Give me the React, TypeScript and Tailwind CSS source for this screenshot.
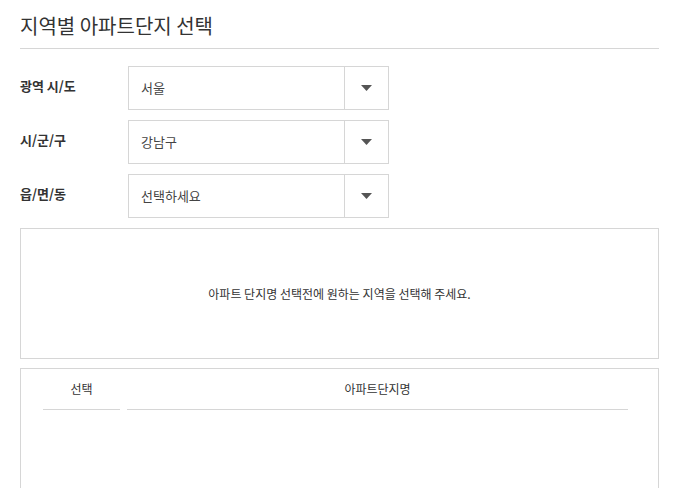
import React from "react";

const font = { fontFamily: '"Noto Sans CJK KR", "Noto Sans", sans-serif' };

function SelectRow({ label, value }: { label: string; value: string }) {
  return (
    <div className="flex h-[44px]">
      <div className="w-[108px] pt-[10px] text-[13px] font-bold leading-[20px] text-[#333]">{label}</div>
      <div className="flex w-[261px] border border-[#d6d6d6] bg-white">
        <div className="flex flex-1 items-center pl-[12px] text-[13px] text-[#444]">{value}</div>
        <div className="flex w-[44px] items-center justify-center border-l border-[#d6d6d6]">
          <svg width="11" height="6" viewBox="0 0 11 6">
            <path d="M0 0 H11 L5.5 6 Z" fill="#555" />
          </svg>
        </div>
      </div>
    </div>
  );
}

export default function App() {
  return (
    <div className="min-h-[488px] w-[684px] bg-white" style={font}>
      <div className="ml-[20px] w-[639px] pt-[11px]">
        <h2 className="border-b border-[#d6d6d6] pb-[7px] text-[20px] font-normal leading-[30px] text-[#333]">
          지역별 아파트단지 선택
        </h2>
        <div className="mt-[17px] flex flex-col gap-[10px]">
          <SelectRow label="광역 시/도" value="서울" />
          <SelectRow label="시/군/구" value="강남구" />
          <SelectRow label="읍/면/동" value="선택하세요" />
        </div>
        <div className="mt-[10px] flex h-[131px] items-center justify-center border border-[#d6d6d6] text-[12px] text-[#333]">
          아파트 단지명 선택전에 원하는 지역을 선택해 주세요.
        </div>
        <div className="mt-[9px] h-[140px] border border-[#d6d6d6] pl-[22px] pr-[30px]">
          <div className="flex gap-[7px]">
            <div className="flex h-[41px] w-[77px] items-center justify-center border-b border-[#d6d6d6] text-[12px] text-[#333]">
              선택
            </div>
            <div className="flex h-[41px] flex-1 items-center justify-center border-b border-[#d6d6d6] text-[12px] text-[#333]">
              아파트단지명
            </div>
          </div>
        </div>
      </div>
    </div>
  );
}
